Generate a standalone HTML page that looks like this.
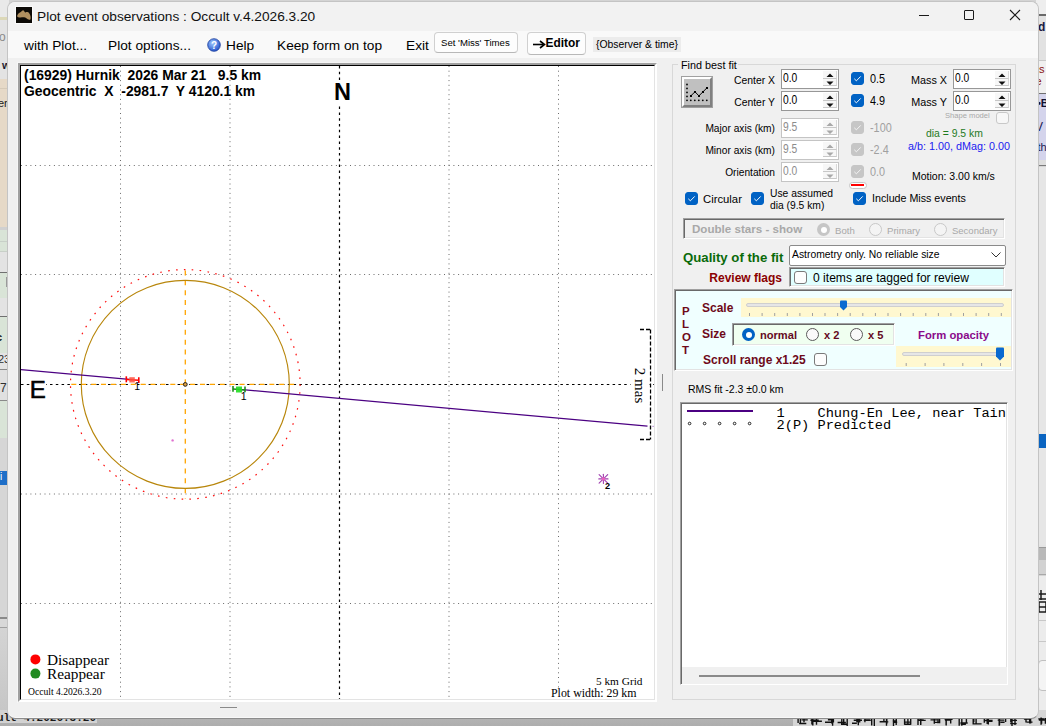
<!DOCTYPE html>
<html><head><meta charset="utf-8">
<style>
*{box-sizing:border-box;margin:0;padding:0}
html,body{width:1046px;height:726px;overflow:hidden;background:#d4d4d4;font-family:"Liberation Sans",sans-serif;font-size:12px;color:#000}
.a{position:absolute;white-space:pre;line-height:1}
#win{position:absolute;left:7px;top:1px;width:1032px;height:718px;background:#f0f0f0;border:1px solid #c4c4c4;border-bottom-color:#8c8c8c;box-shadow:inset 0 -1px 0 #f8f8f8;border-radius:8px;overflow:hidden}
</style></head><body>
<!-- background strips -->
<div id="bgL" style="position:absolute;left:0;top:0;width:9px;height:726px;overflow:hidden">
  <div class="a" style="left:0;top:0;width:9px;height:17px;background:#e9e9e9"></div>
  <div class="a" style="left:0;top:17px;width:9px;height:3px;background:#dcd8b8"></div>
  <div class="a" style="left:0;top:20px;width:9px;height:59px;background:#e3e3e3"></div>
  <div class="a" style="left:0;top:79px;width:9px;height:148px;background:#e6d9c7"></div>
  <div class="a" style="left:0;top:88px;width:9px;height:1px;background:#d6cab8"></div>
  <div class="a" style="left:0;top:227px;width:9px;height:3px;background:#d0d0d0"></div>
  <div class="a" style="left:0;top:230px;width:9px;height:22px;background:#d9e4d7;border-bottom:1px solid #c8d0c8"></div>
  <div class="a" style="left:0;top:241px;width:9px;height:1px;background:#c8d0c8"></div>
  <div class="a" style="left:0;top:252px;width:9px;height:20px;background:#e3e3e3"></div>
  <div class="a" style="left:0;top:272px;width:9px;height:1px;background:#707070"></div>
  <div class="a" style="left:0;top:273px;width:9px;height:25px;background:#d9e4d7"></div>
  <div class="a" style="left:6px;top:277px;width:2px;height:10px;background:#9a9a9a"></div>
  <div class="a" style="left:0;top:298px;width:9px;height:18px;background:#e3e3e3"></div>
  <div class="a" style="left:0;top:316px;width:9px;height:1px;background:#707070"></div>
  <div class="a" style="left:0;top:317px;width:9px;height:36px;background:#d9e4d7"></div>
  <div class="a" style="left:0;top:353px;width:9px;height:16px;background:#e4e4e4"></div>
  <div class="a" style="left:0;top:369px;width:9px;height:1px;background:#8a8a8a"></div>
  <div class="a" style="left:0;top:370px;width:9px;height:30px;background:#e0e0e0"></div>
  <div class="a" style="left:0;top:400px;width:9px;height:1px;background:#8a8a8a"></div>
  <div class="a" style="left:0;top:401px;width:9px;height:37px;background:#d9e4d7"></div>
  <div class="a" style="left:0;top:438px;width:9px;height:33px;background:#d6d6d6"></div>
  <div class="a" style="left:0;top:471px;width:9px;height:14px;background:#1e6fc8"></div>
  <div class="a" style="left:0;top:485px;width:9px;height:132px;background:#d6d6d6"></div>
  <div class="a" style="left:0;top:617px;width:9px;height:2px;background:#8a8a8a"></div>
  <div class="a" style="left:0;top:619px;width:9px;height:8px;background:#d8d8d8"></div>
  <div class="a" style="left:0;top:627px;width:9px;height:1px;background:#a0a0a0"></div>
  <div class="a" style="left:0;top:628px;width:9px;height:98px;background:linear-gradient(#d4d4d4,#c4c4c4)"></div>
  <div class="a" style="left:-1px;top:31px;font-size:12px;color:#8a8a8a">o</div>
  <div class="a" style="left:2px;top:60px;font-size:11px;font-weight:bold;color:#1a1a30">w</div>
  <div class="a" style="left:-2px;top:98px;font-size:11px;color:#202020">er</div>
  <div class="a" style="left:-4px;top:332px;font-size:11px;font-weight:bold;color:#111">c</div>
  <div class="a" style="left:-2px;top:354px;font-size:11px;color:#303030">23</div>
  <div class="a" style="left:0px;top:382px;font-size:12px;color:#303030">7</div>
  <div class="a" style="left:0px;top:472px;font-size:10px;color:#fff">i</div>
</div>
<div id="bgR" style="position:absolute;left:1036px;top:0;width:10px;height:726px;overflow:hidden">
  <div class="a" style="left:0;top:0;width:10px;height:14px;background:#eeeeee"></div>
  <div class="a" style="left:0;top:14px;width:10px;height:2px;background:#6a6a6a"></div>
  <div class="a" style="left:0;top:16px;width:10px;height:44px;background:#e2e2e2"></div>
  <div class="a" style="left:2px;top:21px;font-size:12px;font-weight:bold;color:#1a1a40">d</div>
  <div class="a" style="left:0;top:60px;width:10px;height:33px;background:#f0f0f0;border-top:1px solid #c8c8c8"></div>
  <div class="a" style="left:-3px;top:64px;font-size:11px;color:#8a1010">es</div>
  <div class="a" style="left:-3px;top:76px;font-size:11px;color:#8a1010">ie</div>
  <div class="a" style="left:0;top:93px;width:10px;height:67px;background:#d4d4ec;border-top:1px solid #707070"></div>
  <div class="a" style="left:1px;top:98px;font-size:11px;font-weight:bold;color:#101030">&#8226;B</div>
  <div class="a" style="left:-1px;top:121px;font-size:12px;color:#1a1a50">V</div>
  <div class="a" style="left:-1px;top:142px;font-size:11px;color:#1a1a50">lth</div>
  <div class="a" style="left:0;top:160px;width:10px;height:6px;background:#dedede;border-bottom:1px solid #7a7a7a"></div>
  <div class="a" style="left:0;top:167px;width:10px;height:253px;background:#e6e6e6;border-left:1px solid #bdbdbd"></div>
  <div class="a" style="left:0;top:434px;width:10px;height:14px;background:#0a64c0"></div>
  <div class="a" style="left:0;top:448px;width:10px;height:97px;background:#e6e6e6;border-left:1px solid #bdbdbd"></div>
  <div class="a" style="left:0;top:420px;width:10px;height:14px;background:#e6e6e6;border-left:1px solid #bdbdbd"></div>
  <div class="a" style="left:0;top:545px;width:10px;height:3px;background:#e4e4e4;border-bottom:1px solid #9a9a9a"></div>
  <div class="a" style="left:0;top:548px;width:10px;height:12px;background:#b9b9b9"></div>
  <div class="a" style="left:0;top:560px;width:10px;height:15px;background:#d2d2d2;border-bottom:1px solid #a8a8a8"></div>
  <div class="a" style="left:0;top:576px;width:10px;height:150px;background:#ececec"></div>
  <div class="a" style="left:0;top:620px;width:10px;height:1px;background:#c8c8c8"></div>
  <div class="a" style="left:0;top:641px;width:10px;height:1px;background:#c8c8c8"></div>
  <svg class="a" style="left:0;top:590px" width="10" height="23"><path d="M1 4 H10 M1 9 H10 M5 0 V10 M3 12 H10 V22 H3Z M3 17 H10" stroke="#1a1a1a" stroke-width="1.5" fill="none"/></svg>
  <div class="a" style="left:2px;top:660px;width:12px;height:31px;border:1px solid #c0c0c0;border-radius:4px;background:#f4f4f4"></div>
</div>
<div id="bgB" style="position:absolute;left:0;top:710px;width:1046px;height:16px;background:linear-gradient(#b8b8b8,#aeaeae)"></div>
<div class="a" style="left:0;top:710px;width:97px;height:13px;background:#d2d2d2"></div>
<div class="a" style="left:-3px;top:713px;font-size:11px;font-weight:bold;font-family:'Liberation Mono',monospace;color:#1a1a1a">ult 4.2026.3.20</div>
<div class="a" style="left:793px;top:710px;width:253px;height:16px;background:#d6d6d6"></div>
<svg class="a" style="left:0;top:0" width="1046" height="726"><path d="M800.4 717.6 V723.5 M804.0 717.9 V722.3 M798.1 718.5 V723.0 M801.5 719.9 H807.8 M799.1 723.5 H806.3 M812.8 717.9 V725.5 M816.5 718.2 V724.7 M811.9 718.3 V724.4 M810.4 720.3 H818.8 M813.5 721.3 H821.9 M831.7 718.8 V723.6 M832.6 717.3 V725.7 M833.4 716.3 V722.5 M827.9 719.8 H834.1 M825.0 722.3 H831.5 M841.8 717.1 V724.3 M843.7 718.7 V724.7 M847.2 718.6 V726.0 M837.6 722.5 H845.9 M841.0 724.3 H847.8 M858.3 716.6 V725.3 M856.9 716.9 V722.3 M859.7 719.0 V722.4 M852.0 723.3 H856.8 M853.7 720.3 H862.0 M864.9 717.8 V722.2 M871.7 717.0 V725.5 M874.3 717.5 V726.0 M863.8 720.4 H870.8 M864.4 718.7 H870.4 M883.9 716.5 V722.2 M886.5 716.9 V725.8 M886.8 717.1 V723.8 M879.7 721.6 H886.7 M879.6 721.9 H888.3 M896.2 717.3 V724.9 M893.5 716.9 V725.9 M896.3 717.6 V722.0 M892.7 721.0 H896.8 M892.9 722.2 H897.2 M910.7 717.4 V724.7 M907.9 718.1 V725.0 M904.6 716.2 V724.7 M904.5 724.3 H910.8 M904.8 722.1 H910.7 M920.8 717.1 V724.4 M920.7 717.1 V725.1 M918.0 717.7 V724.9 M917.7 720.4 H925.7 M917.5 719.9 H923.7 M938.0 716.3 V723.3 M934.3 718.5 V723.8 M939.6 716.5 V723.3 M934.0 722.4 H940.2 M930.5 719.9 H937.2 M946.2 718.4 V725.4 M946.1 716.8 V725.2 M950.7 718.4 V723.4 M944.6 719.3 H952.6 M944.9 720.1 H950.9 M961.8 717.2 V725.7 M959.2 716.0 V725.8 M966.4 719.0 V723.7 M960.8 724.2 H965.9 M960.4 723.0 H967.7 M976.1 716.9 V723.4 M973.2 716.2 V724.4 M973.8 718.4 V722.2 M973.0 723.9 H981.6 M973.9 723.9 H980.8 M984.3 718.2 V722.7 M987.2 718.0 V724.1 M988.3 718.8 V724.4 M984.3 720.5 H992.6 M986.7 721.4 H992.5 M999.5 717.6 V725.3 M999.2 718.4 V725.7 M1005.6 718.5 V722.0 M1000.4 722.3 H1004.6 M997.7 720.1 H1004.3 M1015.0 717.4 V725.1 M1010.8 716.2 V722.5 M1012.0 716.2 V725.9 M1010.2 723.6 H1016.7 M1011.2 720.4 H1017.0 M1030.6 717.8 V723.4 M1026.0 717.0 V722.5 M1029.7 718.1 V723.5 M1023.9 719.0 H1029.8 M1026.6 722.1 H1032.5 M1045.4 717.9 V723.7 M1041.1 717.5 V724.8 M1041.6 718.1 V723.8 M1038.8 720.0 H1046.3 M1038.3 718.9 H1044.4 " stroke="#111" stroke-width="1.4" fill="none"/></svg>
<div id="win"></div>
<!-- title bar -->
<div class="a" style="left:8px;top:2px;width:1030px;height:29px;background:#f2f2f2;border-radius:7px 7px 0 0"></div>
<div class="a" style="left:8px;top:31px;width:1030px;height:27px;background:#f9f9f9"></div>
<div id="content">
<div class="a" style="left:16px;top:7px;width:16px;height:16px;background:#0c0a06;box-shadow:0 0 0 1px #fbfbfb"></div>
<svg class="a" style="left:16px;top:7px" width="16" height="16" viewBox="0 0 16 16"><path d="M1.1 9.1 C1.5 7.5 2.5 6.5 3.5 5.8 C4.8 5 6 3.6 7 3.2 C7.8 3.3 8.2 4 8.4 4.5 C8.8 5.2 9.2 5.6 9.6 5.5 C10.2 5 10.8 4.9 11.5 5 C12.5 5.2 13.3 6 13.8 7.2 C14.6 8.8 14.9 10.5 14.5 12.2 C14 12.9 12.8 12.8 11.8 12.3 C10.8 11.6 10 10.6 9 10.4 C7.5 10.2 6 10.4 4.5 10.4 C3.3 10.6 2.2 10.6 1.6 10.1Z" fill="#b0905f"/></svg>
<div class="a" style="left:37px;top:9.8px;font-size:13.7px;color:#111">Plot event observations : Occult v.4.2026.3.20</div>
<div class="a" style="left:919px;top:15px;width:10px;height:1px;background:#1a1a1a"></div>
<div class="a" style="left:964px;top:10px;width:10px;height:10px;border:1px solid #1a1a1a;border-radius:1px"></div>
<svg class="a" style="left:1009px;top:9px" width="12" height="12" viewBox="0 0 12 12"><path d="M1 1 L11 11 M11 1 L1 11" stroke="#1a1a1a" stroke-width="1.1"/></svg>
<div class="a" style="left:24px;top:39px;font-size:13.7px">with Plot...</div>
<div class="a" style="left:108px;top:39px;font-size:13.7px">Plot options...</div>
<svg class="a" style="left:207px;top:38px" width="14" height="14" viewBox="0 0 14 14"><defs><radialGradient id="hg" cx="0.4" cy="0.35" r="0.7"><stop offset="0" stop-color="#9fc8ff"/><stop offset="1" stop-color="#1f4fc8"/></radialGradient></defs><circle cx="7" cy="7" r="6.3" fill="url(#hg)" stroke="#1a3c9a" stroke-width="0.8"/><text x="7" y="11" text-anchor="middle" font-family="Liberation Sans" font-weight="bold" font-size="10" fill="#fff">?</text></svg>
<div class="a" style="left:226px;top:39px;font-size:13.7px">Help</div>
<div class="a" style="left:277px;top:39px;font-size:13.7px">Keep form on top</div>
<div class="a" style="left:406px;top:39px;font-size:13.7px">Exit</div>
<div class="a" style="left:434px;top:32px;width:84px;height:21px;background:#fdfdfd;border:1px solid #d0d0d0;border-bottom-color:#b8b8b8;border-radius:4px"></div>
<div class="a" style="left:441px;top:38px;font-size:9.6px">Set 'Miss' Times</div>
<div class="a" style="left:527px;top:32px;width:59px;height:23px;background:#fdfdfd;border:1px solid #d0d0d0;border-bottom-color:#b8b8b8;border-radius:4px"></div>
<svg class="a" style="left:533px;top:40px" width="13" height="9" viewBox="0 0 13 9"><path d="M0 4.5 H10" stroke="#000" stroke-width="1.6"/><path d="M7 1 L11.5 4.5 L7 8" fill="none" stroke="#000" stroke-width="1.6"/></svg><div class="a" style="left:545.5px;top:38px;font-size:11.9px;font-weight:bold">Editor</div>
<div class="a" style="left:593px;top:37px;width:88px;height:15px;background:#ececec"></div>
<div class="a" style="left:596px;top:40px;font-size:10.4px">{Observer &amp; time}</div>
<div class="a" style="left:17px;top:62px;width:641px;height:641px;border-top:1px solid #f6f6f6;border-left:1px solid #f6f6f6"></div>
<div class="a" style="left:18px;top:63px;width:639px;height:639px;background:#fff;border-top:2px solid #a0a0a0;border-left:2px solid #a0a0a0;border-right:2px solid #fff;border-bottom:2px solid #fff"></div>
<div class="a" style="left:20px;top:65px;width:635px;height:635px;border-top:1px solid #000;border-left:1px solid #000;border-right:1px solid #e3e3e3;border-bottom:1px solid #e3e3e3"></div>
<svg class="a" style="left:21px;top:66px" width="633" height="633" viewBox="21 66 633 633"><line x1="120.5" y1="66" x2="120.5" y2="699" stroke="#6a6a6a" stroke-width="1" stroke-dasharray="1 3.7"/><line x1="230" y1="66" x2="230" y2="699" stroke="#6a6a6a" stroke-width="1" stroke-dasharray="1 3.7"/><line x1="449" y1="66" x2="449" y2="699" stroke="#6a6a6a" stroke-width="1" stroke-dasharray="1 3.7"/><line x1="558.5" y1="66" x2="558.5" y2="699" stroke="#6a6a6a" stroke-width="1" stroke-dasharray="1 3.7"/><line x1="21" y1="165.5" x2="654" y2="165.5" stroke="#6a6a6a" stroke-width="1" stroke-dasharray="1 3.7"/><line x1="21" y1="274.5" x2="654" y2="274.5" stroke="#6a6a6a" stroke-width="1" stroke-dasharray="1 3.7"/><line x1="21" y1="494" x2="654" y2="494" stroke="#6a6a6a" stroke-width="1" stroke-dasharray="1 3.7"/><line x1="21" y1="603.5" x2="654" y2="603.5" stroke="#6a6a6a" stroke-width="1" stroke-dasharray="1 3.7"/><line x1="339.5" y1="66" x2="339.5" y2="699" stroke="#000" stroke-width="1.2" stroke-dasharray="2.5 3.3"/><line x1="21" y1="384.5" x2="654" y2="384.5" stroke="#000" stroke-width="1.2" stroke-dasharray="2.5 3.3"/><line x1="185.3" y1="270.4" x2="185.3" y2="498.4" stroke="#ffa500" stroke-width="1.3" stroke-dasharray="5 4.9"/><line x1="71.30000000000001" y1="384.4" x2="299.3" y2="384.4" stroke="#ffa500" stroke-width="1.3" stroke-dasharray="5 4.9"/><circle cx="185.3" cy="384.4" r="104" fill="none" stroke="#b8860b" stroke-width="1.15"/><circle cx="185.3" cy="384.4" r="114.8" fill="none" stroke="#ff1010" stroke-width="1.2" stroke-dasharray="1.6 6.3265"/><circle cx="185.3" cy="384.4" r="1.9" fill="#e0a040" stroke="#222" stroke-width="1"/><circle cx="172.6" cy="440.4" r="1.2" fill="#e070d0"/><line x1="20.2" y1="369.6" x2="132" y2="379.68" stroke="#4b0082" stroke-width="1.25"/><line x1="240" y1="389.43" x2="647.5" y2="426.2" stroke="#4b0082" stroke-width="1.25"/><rect x="652.5" y="425.8" width="1.2" height="1.2" fill="#b080d0"/><g stroke="#ff0000" stroke-width="1.6"><line x1="126.3" y1="376.3" x2="126.3" y2="382.3"/><line x1="138.8" y1="377.3" x2="138.8" y2="383"/><line x1="126.3" y1="379.5" x2="138.8" y2="380.3"/></g><rect x="129.3" y="377.2" width="5.5" height="5.3" fill="#ff5040" opacity="0.85"/><g stroke="#1e8a1e" stroke-width="1.6"><line x1="233" y1="386" x2="233" y2="391.7"/><line x1="245" y1="386.5" x2="245" y2="392.2"/><line x1="233" y1="389" x2="245" y2="390"/></g><rect x="236" y="386.5" width="6" height="6" fill="#22dd22" opacity="0.9"/><text x="134.3" y="390" font-family="Liberation Sans" font-size="10.5" fill="#000">1</text><text x="240.7" y="399.8" font-family="Liberation Sans" font-size="10.5" fill="#000">1</text><g stroke="#a040b0" stroke-width="1.1" stroke-linecap="round"><line x1="598.8" y1="478.9" x2="608.0" y2="478.9"/><line x1="603.4" y1="474.29999999999995" x2="603.4" y2="483.5"/><line x1="599.1" y1="474.59999999999997" x2="607.6999999999999" y2="483.2"/><line x1="599.1" y1="483.2" x2="607.6999999999999" y2="474.59999999999997"/></g><circle cx="603.4" cy="478.9" r="1.6" fill="#f060c0"/><text x="605" y="488.6" font-family="Liberation Sans" font-size="9.2" font-weight="bold" fill="#000">2</text><g stroke="#000" stroke-width="1.3" fill="none"><line x1="650.5" y1="329.5" x2="650.5" y2="439.5" stroke-dasharray="4 2"/><line x1="640" y1="329.5" x2="650.5" y2="329.5" stroke-dasharray="4 2"/><line x1="640" y1="439.5" x2="650.5" y2="439.5" stroke-dasharray="4 2"/></g><rect x="630.5" y="366" width="19" height="38" fill="#fff"/><text transform="translate(634.5,367.8) rotate(90)" font-family="Liberation Serif" font-size="15" fill="#000">2 mas</text><circle cx="35.4" cy="659.4" r="5" fill="#ff0000"/><circle cx="35.4" cy="673.6" r="5" fill="#228b22"/></svg>
<div class="a" style="left:24px;top:69px;font-size:13.9px;font-weight:bold;white-space:pre">(16929) Hurnik  2026 Mar 21   9.5 km</div>
<div class="a" style="left:24px;top:85px;font-size:13.9px;font-weight:bold;white-space:pre">Geocentric  X  -2981.7  Y 4120.1 km</div>
<div class="a" style="left:334px;top:81px;font-size:23.5px;font-weight:bold;background:#fff;padding-top:0px">N</div>
<div class="a" style="left:29.7px;top:378.5px;font-size:24px;background:#fff;line-height:0.95;-webkit-text-stroke:0.6px #000">E</div>
<div class="a" style="left:47px;top:652px;font-size:15.3px;font-family:'Liberation Serif',serif">Disappear</div>
<div class="a" style="left:47px;top:666px;font-size:15.3px;font-family:'Liberation Serif',serif">Reappear</div>
<div class="a" style="left:28px;top:687px;font-size:9.6px;font-family:'Liberation Serif',serif">Occult 4.2026.3.20</div>
<div class="a" style="left:596px;top:676px;font-size:11.3px;font-family:'Liberation Serif',serif">5 km Grid</div>
<div class="a" style="left:551px;top:687.5px;font-size:11.9px;font-family:'Liberation Serif',serif;background:#fff;padding-right:1px">Plot width: 29 km</div>
<div class="a" style="left:662px;top:374px;width:1px;height:17px;background:#8a8a8a"></div>
<div class="a" style="left:220px;top:707px;width:17px;height:1px;background:#8a8a8a"></div>
<div class="a" style="left:672px;top:64px;width:344px;height:636px;border:1px solid #d8d8d8"></div>
<div class="a" style="left:678px;top:58px;width:60px;height:12px;background:#f0f0f0"></div>
<div class="a" style="left:681px;top:59.5px;font-size:10.8px;color:#000;">Find best fit</div>
<div class="a" style="left:681px;top:76px;width:32px;height:32px;background:#c0c0c0;border:1px solid #a0a0a0"></div>
<div class="a" style="left:682px;top:77px;width:30px;height:30px;border-top:2px solid #fff;border-left:2px solid #fff;border-right:2px solid #808080;border-bottom:2px solid #808080"></div>
<svg class="a" style="left:681px;top:76px" width="32" height="32" viewBox="681 76 32 32"><circle cx="687" cy="84.5" r="0.9" fill="#000"/><circle cx="687" cy="88.4" r="0.9" fill="#000"/><circle cx="687" cy="92.4" r="0.9" fill="#000"/><circle cx="687" cy="96.4" r="0.9" fill="#000"/><circle cx="687" cy="100.3" r="0.9" fill="#000"/><circle cx="690.8" cy="100.3" r="0.9" fill="#000"/><circle cx="694.8" cy="100.3" r="0.9" fill="#000"/><circle cx="698.8" cy="100.3" r="0.9" fill="#000"/><circle cx="702.8" cy="100.3" r="0.9" fill="#000"/><circle cx="706.8" cy="100.3" r="0.9" fill="#000"/><polyline points="690.8,95.9 695,91.8 698.9,95.9 703,91.8 707,87.8" fill="none" stroke="#000" stroke-width="1"/><g fill="#000"><rect x="690" y="95" width="2" height="2"/><rect x="694" y="91" width="2" height="2"/><rect x="698" y="95" width="2" height="2"/><rect x="702" y="91" width="2" height="2"/><rect x="706" y="87" width="2" height="2"/></g></svg>
<div class="a" style="left:475px;top:75.5px;width:300px;text-align:right;font-size:10.4px;color:#000;">Center X</div>
<div class="a" style="left:781px;top:69px;width:58px;height:20px;background:#fff;border:1px solid #979797"></div><div class="a" style="left:783px;top:72.4px;font-size:12.5px;color:#000;transform:scaleX(0.82);transform-origin:0 0">0.0</div><div class="a" style="left:823px;top:71px;width:14px;height:8px;background:#f7f7f7;border-right:1px solid #d8d8d8;border-bottom:1px solid #c8c8c8"></div><div class="a" style="left:823px;top:79px;width:14px;height:7px;background:#f7f7f7;border-right:1px solid #d8d8d8;border-bottom:1px solid #c8c8c8"></div><svg class="a" style="left:823px;top:71px" width="14" height="16" viewBox="0 0 14 16"><path d="M3.5 6 L7 2.5 L10.5 6Z M3.5 10.5 L7 14 L10.5 10.5Z" fill="#111"/></svg>
<div class="a" style="left:475px;top:97.5px;width:300px;text-align:right;font-size:10.4px;color:#000;">Center Y</div>
<div class="a" style="left:781px;top:91px;width:58px;height:20px;background:#fff;border:1px solid #979797"></div><div class="a" style="left:783px;top:94.4px;font-size:12.5px;color:#000;transform:scaleX(0.82);transform-origin:0 0">0.0</div><div class="a" style="left:823px;top:93px;width:14px;height:8px;background:#f7f7f7;border-right:1px solid #d8d8d8;border-bottom:1px solid #c8c8c8"></div><div class="a" style="left:823px;top:101px;width:14px;height:7px;background:#f7f7f7;border-right:1px solid #d8d8d8;border-bottom:1px solid #c8c8c8"></div><svg class="a" style="left:823px;top:93px" width="14" height="16" viewBox="0 0 14 16"><path d="M3.5 6 L7 2.5 L10.5 6Z M3.5 10.5 L7 14 L10.5 10.5Z" fill="#111"/></svg>
<div class="a" style="left:475px;top:124px;width:300px;text-align:right;font-size:10.2px;color:#000;">Major axis (km)</div>
<div class="a" style="left:781px;top:118px;width:58px;height:20px;background:#fff;border:1px solid #c4c4c4"></div><div class="a" style="left:783px;top:121.4px;font-size:12.5px;color:#8c8c8c;transform:scaleX(0.82);transform-origin:0 0">9.5</div><div class="a" style="left:823px;top:120px;width:14px;height:8px;background:#f7f7f7;border-right:1px solid #d8d8d8;border-bottom:1px solid #c8c8c8"></div><div class="a" style="left:823px;top:128px;width:14px;height:7px;background:#f7f7f7;border-right:1px solid #d8d8d8;border-bottom:1px solid #c8c8c8"></div><svg class="a" style="left:823px;top:120px" width="14" height="16" viewBox="0 0 14 16"><path d="M3.5 6 L7 2.5 L10.5 6Z M3.5 10.5 L7 14 L10.5 10.5Z" fill="#a8a8a8"/></svg>
<div class="a" style="left:475px;top:146px;width:300px;text-align:right;font-size:10.2px;color:#000;">Minor axis (km)</div>
<div class="a" style="left:781px;top:140px;width:58px;height:20px;background:#fff;border:1px solid #c4c4c4"></div><div class="a" style="left:783px;top:143.4px;font-size:12.5px;color:#8c8c8c;transform:scaleX(0.82);transform-origin:0 0">9.5</div><div class="a" style="left:823px;top:142px;width:14px;height:8px;background:#f7f7f7;border-right:1px solid #d8d8d8;border-bottom:1px solid #c8c8c8"></div><div class="a" style="left:823px;top:150px;width:14px;height:7px;background:#f7f7f7;border-right:1px solid #d8d8d8;border-bottom:1px solid #c8c8c8"></div><svg class="a" style="left:823px;top:142px" width="14" height="16" viewBox="0 0 14 16"><path d="M3.5 6 L7 2.5 L10.5 6Z M3.5 10.5 L7 14 L10.5 10.5Z" fill="#a8a8a8"/></svg>
<div class="a" style="left:475px;top:167.5px;width:300px;text-align:right;font-size:10.2px;color:#000;">Orientation</div>
<div class="a" style="left:781px;top:162px;width:58px;height:20px;background:#fff;border:1px solid #c4c4c4"></div><div class="a" style="left:783px;top:165.4px;font-size:12.5px;color:#8c8c8c;transform:scaleX(0.82);transform-origin:0 0">0.0</div><div class="a" style="left:823px;top:164px;width:14px;height:8px;background:#f7f7f7;border-right:1px solid #d8d8d8;border-bottom:1px solid #c8c8c8"></div><div class="a" style="left:823px;top:172px;width:14px;height:7px;background:#f7f7f7;border-right:1px solid #d8d8d8;border-bottom:1px solid #c8c8c8"></div><svg class="a" style="left:823px;top:164px" width="14" height="16" viewBox="0 0 14 16"><path d="M3.5 6 L7 2.5 L10.5 6Z M3.5 10.5 L7 14 L10.5 10.5Z" fill="#a8a8a8"/></svg>
<div class="a" style="left:851px;top:72px;width:13px;height:13px;background:#0062c4;border:1px solid #0062c4;border-radius:3px"></div><svg class="a" style="left:851px;top:72px" width="13" height="13" viewBox="0 0 13 13"><path d="M3.3 6.8 L5.4 8.8 L9.7 4.4" fill="none" stroke="#fff" stroke-width="0.95"/></svg>
<div class="a" style="left:870px;top:72.6px;font-size:12.6px;color:#000;transform:scaleX(0.86);transform-origin:0 0">0.5</div>
<div class="a" style="left:851px;top:94px;width:13px;height:13px;background:#0062c4;border:1px solid #0062c4;border-radius:3px"></div><svg class="a" style="left:851px;top:94px" width="13" height="13" viewBox="0 0 13 13"><path d="M3.3 6.8 L5.4 8.8 L9.7 4.4" fill="none" stroke="#fff" stroke-width="0.95"/></svg>
<div class="a" style="left:870px;top:94.6px;font-size:12.6px;color:#000;transform:scaleX(0.86);transform-origin:0 0">4.9</div>
<div class="a" style="left:851px;top:121px;width:13px;height:13px;background:#c6c6c6;border:1px solid #c6c6c6;border-radius:3px"></div><svg class="a" style="left:851px;top:121px" width="13" height="13" viewBox="0 0 13 13"><path d="M3.3 6.8 L5.4 8.8 L9.7 4.4" fill="none" stroke="#f4f4f4" stroke-width="0.95"/></svg>
<div class="a" style="left:870px;top:121.6px;font-size:12.6px;color:#a0a0a0;transform:scaleX(0.86);transform-origin:0 0">-100</div>
<div class="a" style="left:851px;top:143px;width:13px;height:13px;background:#c6c6c6;border:1px solid #c6c6c6;border-radius:3px"></div><svg class="a" style="left:851px;top:143px" width="13" height="13" viewBox="0 0 13 13"><path d="M3.3 6.8 L5.4 8.8 L9.7 4.4" fill="none" stroke="#f4f4f4" stroke-width="0.95"/></svg>
<div class="a" style="left:870px;top:143.6px;font-size:12.6px;color:#a0a0a0;transform:scaleX(0.86);transform-origin:0 0">-2.4</div>
<div class="a" style="left:851px;top:165px;width:13px;height:13px;background:#c6c6c6;border:1px solid #c6c6c6;border-radius:3px"></div><svg class="a" style="left:851px;top:165px" width="13" height="13" viewBox="0 0 13 13"><path d="M3.3 6.8 L5.4 8.8 L9.7 4.4" fill="none" stroke="#f4f4f4" stroke-width="0.95"/></svg>
<div class="a" style="left:870px;top:165.6px;font-size:12.6px;color:#a0a0a0;transform:scaleX(0.86);transform-origin:0 0">0.0</div>
<div class="a" style="left:848.5px;top:181.5px;width:18px;height:7.5px;background:#fff;border:1px solid #c4c4c4;border-radius:4px"></div>
<div class="a" style="left:851px;top:184px;width:13px;height:2.2px;background:#ff0000"></div>
<div class="a" style="left:647px;top:75px;width:300px;text-align:right;font-size:10.8px;color:#000;">Mass X</div>
<div class="a" style="left:953px;top:69px;width:58px;height:20px;background:#fff;border:1px solid #979797"></div><div class="a" style="left:955px;top:72.4px;font-size:12.5px;color:#000;transform:scaleX(0.82);transform-origin:0 0">0.0</div><div class="a" style="left:995px;top:71px;width:14px;height:8px;background:#f7f7f7;border-right:1px solid #d8d8d8;border-bottom:1px solid #c8c8c8"></div><div class="a" style="left:995px;top:79px;width:14px;height:7px;background:#f7f7f7;border-right:1px solid #d8d8d8;border-bottom:1px solid #c8c8c8"></div><svg class="a" style="left:995px;top:71px" width="14" height="16" viewBox="0 0 14 16"><path d="M3.5 6 L7 2.5 L10.5 6Z M3.5 10.5 L7 14 L10.5 10.5Z" fill="#111"/></svg>
<div class="a" style="left:647px;top:97px;width:300px;text-align:right;font-size:10.8px;color:#000;">Mass Y</div>
<div class="a" style="left:953px;top:91px;width:58px;height:20px;background:#fff;border:1px solid #979797"></div><div class="a" style="left:955px;top:94.4px;font-size:12.5px;color:#000;transform:scaleX(0.82);transform-origin:0 0">0.0</div><div class="a" style="left:995px;top:93px;width:14px;height:8px;background:#f7f7f7;border-right:1px solid #d8d8d8;border-bottom:1px solid #c8c8c8"></div><div class="a" style="left:995px;top:101px;width:14px;height:7px;background:#f7f7f7;border-right:1px solid #d8d8d8;border-bottom:1px solid #c8c8c8"></div><svg class="a" style="left:995px;top:93px" width="14" height="16" viewBox="0 0 14 16"><path d="M3.5 6 L7 2.5 L10.5 6Z M3.5 10.5 L7 14 L10.5 10.5Z" fill="#111"/></svg>
<div class="a" style="left:945px;top:112px;font-size:7.6px;color:#a8a8a8;">Shape model</div>
<div class="a" style="left:996px;top:112px;width:13px;height:12px;background:#f7f7f7;border:1px solid #c8c8c8;border-radius:3px"></div>
<div class="a" style="left:926px;top:128.5px;font-size:10.4px;color:#1e7a1e;">dia = 9.5 km</div>
<div class="a" style="left:908px;top:141px;font-size:10.8px;color:#2020f0;">a/b: 1.00, dMag: 0.00</div>
<div class="a" style="left:912px;top:171px;font-size:10.5px;color:#000;">Motion: 3.00 km/s</div>
<div class="a" style="left:685px;top:192px;width:13px;height:13px;background:#0062c4;border:1px solid #0062c4;border-radius:3px"></div><svg class="a" style="left:685px;top:192px" width="13" height="13" viewBox="0 0 13 13"><path d="M3.3 6.8 L5.4 8.8 L9.7 4.4" fill="none" stroke="#fff" stroke-width="0.95"/></svg>
<div class="a" style="left:703px;top:193.5px;font-size:11.3px;color:#000;">Circular</div>
<div class="a" style="left:751px;top:192px;width:13px;height:13px;background:#0062c4;border:1px solid #0062c4;border-radius:3px"></div><svg class="a" style="left:751px;top:192px" width="13" height="13" viewBox="0 0 13 13"><path d="M3.3 6.8 L5.4 8.8 L9.7 4.4" fill="none" stroke="#fff" stroke-width="0.95"/></svg>
<div class="a" style="left:770px;top:188.5px;font-size:10.3px;color:#000;">Use assumed</div>
<div class="a" style="left:770px;top:200.5px;font-size:10.3px;color:#000;">dia (9.5 km)</div>
<div class="a" style="left:853px;top:192px;width:13px;height:13px;background:#0062c4;border:1px solid #0062c4;border-radius:3px"></div><svg class="a" style="left:853px;top:192px" width="13" height="13" viewBox="0 0 13 13"><path d="M3.3 6.8 L5.4 8.8 L9.7 4.4" fill="none" stroke="#fff" stroke-width="0.95"/></svg>
<div class="a" style="left:872px;top:193px;font-size:10.7px;color:#000;">Include Miss events</div>
<div class="a" style="left:683px;top:218px;width:322px;height:21px;border-top:1px solid #a0a0a0;border-left:1px solid #a0a0a0;border-right:1px solid #fff;border-bottom:1px solid #fff;box-shadow:inset 1px 1px 0 #696969,inset -1px -1px 0 #e3e3e3"></div>
<div class="a" style="left:692px;top:223px;font-size:11.6px;color:#a8a8a8;font-weight:bold">Double stars - show</div>
<div class="a" style="left:817px;top:223px;width:13px;height:13px;border-radius:50%;background:#c6c6c6"></div><div class="a" style="left:820.5px;top:226.5px;width:6px;height:6px;border-radius:50%;background:#fff"></div>
<div class="a" style="left:835px;top:226px;font-size:9.6px;color:#a8a8a8;">Both</div>
<div class="a" style="left:869px;top:223px;width:13px;height:13px;border-radius:50%;background:#f4f4f4;border:1px solid #c8c8c8"></div>
<div class="a" style="left:887px;top:226px;font-size:9.6px;color:#a8a8a8;">Primary</div>
<div class="a" style="left:934px;top:223px;width:13px;height:13px;border-radius:50%;background:#f4f4f4;border:1px solid #c8c8c8"></div>
<div class="a" style="left:952px;top:226px;font-size:9.5px;color:#a8a8a8;">Secondary</div>
<div class="a" style="left:683px;top:251px;font-size:13.2px;color:#0a6a0a;font-weight:bold">Quality of the fit</div>
<div class="a" style="left:789px;top:245px;width:217px;height:21px;background:#fff;border:1px solid #8a8a8a;border-radius:2px"></div>
<div class="a" style="left:792px;top:249.5px;font-size:10.35px;color:#000;">Astrometry only. No reliable size</div>
<svg class="a" style="left:991px;top:252px" width="10" height="6" viewBox="0 0 10 6"><path d="M0.5 0.5 L5 5 L9.5 0.5" fill="none" stroke="#333" stroke-width="1"/></svg>
<div class="a" style="left:482px;top:272px;width:300px;text-align:right;font-size:12px;color:#8b0000;font-weight:bold">Review flags</div>
<div class="a" style="left:789px;top:267px;width:216px;height:20px;background:#e0ffff;border-top:1px solid #a0a0a0;border-left:1px solid #a0a0a0;border-right:1px solid #fff;border-bottom:1px solid #fff;box-shadow:inset 1px 1px 0 #696969,inset -1px -1px 0 #e3e3e3"></div>
<div class="a" style="left:794px;top:271px;width:13px;height:13px;background:#fdfdfd;border:1px solid #7a7a7a;border-radius:3px"></div>
<div class="a" style="left:813px;top:271.5px;font-size:12.1px;color:#000;">0 items are tagged for review</div>
<div class="a" style="left:674px;top:289px;width:339px;height:82px;background:#f0ffff;border-top:1px solid #a0a0a0;border-left:1px solid #a0a0a0;border-right:1px solid #fff;border-bottom:1px solid #fff;box-shadow:inset 1px 1px 0 #696969,inset -1px -1px 0 #e3e3e3"></div>
<div class="a" style="left:682px;top:306px;font-size:11.5px;color:#6e0a1a;font-weight:bold">P</div>
<div class="a" style="left:682px;top:319px;font-size:11.5px;color:#6e0a1a;font-weight:bold">L</div>
<div class="a" style="left:682px;top:332px;font-size:11.5px;color:#6e0a1a;font-weight:bold">O</div>
<div class="a" style="left:682px;top:345px;font-size:11.5px;color:#6e0a1a;font-weight:bold">T</div>
<div class="a" style="left:702px;top:302px;font-size:12px;color:#6e0a1a;font-weight:bold">Scale</div>
<div class="a" style="left:741px;top:298px;width:270px;height:19px;background:#fff8d0"></div>
<div class="a" style="left:746px;top:303px;width:258px;height:4px;background:#e6e6e6;border:1px solid #cfcfcf;border-radius:2px"></div>
<svg class="a" style="left:0px;top:313px" width="1046" height="4"><rect x="749.0" y="0" width="1" height="3" fill="#a0a0a0"/><rect x="761.6" y="0" width="1" height="3" fill="#a0a0a0"/><rect x="774.2" y="0" width="1" height="3" fill="#a0a0a0"/><rect x="786.8" y="0" width="1" height="3" fill="#a0a0a0"/><rect x="799.4" y="0" width="1" height="3" fill="#a0a0a0"/><rect x="812.0" y="0" width="1" height="3" fill="#a0a0a0"/><rect x="824.5" y="0" width="1" height="3" fill="#a0a0a0"/><rect x="837.1" y="0" width="1" height="3" fill="#a0a0a0"/><rect x="849.7" y="0" width="1" height="3" fill="#a0a0a0"/><rect x="862.3" y="0" width="1" height="3" fill="#a0a0a0"/><rect x="874.9" y="0" width="1" height="3" fill="#a0a0a0"/><rect x="887.5" y="0" width="1" height="3" fill="#a0a0a0"/><rect x="900.1" y="0" width="1" height="3" fill="#a0a0a0"/><rect x="912.7" y="0" width="1" height="3" fill="#a0a0a0"/><rect x="925.3" y="0" width="1" height="3" fill="#a0a0a0"/><rect x="937.9" y="0" width="1" height="3" fill="#a0a0a0"/><rect x="950.4" y="0" width="1" height="3" fill="#a0a0a0"/><rect x="963.0" y="0" width="1" height="3" fill="#a0a0a0"/><rect x="975.6" y="0" width="1" height="3" fill="#a0a0a0"/><rect x="988.2" y="0" width="1" height="3" fill="#a0a0a0"/><rect x="1000.8" y="0" width="1" height="3" fill="#a0a0a0"/></svg>
<svg class="a" style="left:839px;top:300px" width="9" height="11" viewBox="0 0 9 11"><path d="M1 1.5 Q1 0.5 2 0.5 L7 0.5 Q8 0.5 8 1.5 L8 7 L4.5 10.5 L1 7Z" fill="#0a6ad0"/></svg>
<div class="a" style="left:702px;top:328px;font-size:12px;color:#6e0a1a;font-weight:bold">Size</div>
<div class="a" style="left:732px;top:323px;width:163px;height:23px;background:#f0fff0;border-top:1px solid #a0a0a0;border-left:1px solid #a0a0a0;border-right:1px solid #fff;border-bottom:1px solid #fff;box-shadow:inset 1px 1px 0 #696969,inset -1px -1px 0 #e3e3e3"></div>
<div class="a" style="left:742px;top:328px;width:13px;height:13px;border-radius:50%;background:#0062c4"></div><div class="a" style="left:745.5px;top:331.5px;width:6px;height:6px;border-radius:50%;background:#fff"></div>
<div class="a" style="left:760px;top:330px;font-size:11.1px;color:#640a1e;font-weight:bold">normal</div>
<div class="a" style="left:806px;top:328px;width:13px;height:13px;border-radius:50%;background:#fafafa;border:1px solid #5a5a5a"></div>
<div class="a" style="left:824px;top:330px;font-size:11.1px;color:#640a1e;font-weight:bold">x 2</div>
<div class="a" style="left:850px;top:328px;width:13px;height:13px;border-radius:50%;background:#fafafa;border:1px solid #5a5a5a"></div>
<div class="a" style="left:868px;top:330px;font-size:11.1px;color:#640a1e;font-weight:bold">x 5</div>
<div class="a" style="left:918px;top:330px;font-size:11.3px;color:#8a0a8a;font-weight:bold">Form opacity</div>
<div class="a" style="left:703px;top:354px;font-size:12px;color:#6e0a1a;font-weight:bold">Scroll range x1.25</div>
<div class="a" style="left:814px;top:353px;width:13px;height:13px;background:#fdfdfd;border:1px solid #7a7a7a;border-radius:3px"></div>
<div class="a" style="left:896px;top:346px;width:115px;height:21px;background:#fff8d0"></div>
<div class="a" style="left:902px;top:352px;width:102px;height:4px;background:#e6e6e6;border:1px solid #cfcfcf;border-radius:2px"></div>
<svg class="a" style="left:0px;top:363px" width="1046" height="4"><rect x="905.7" y="0" width="1" height="3" fill="#a0a0a0"/><rect x="924.6" y="0" width="1" height="3" fill="#a0a0a0"/><rect x="943.4" y="0" width="1" height="3" fill="#a0a0a0"/><rect x="962.3" y="0" width="1" height="3" fill="#a0a0a0"/><rect x="981.1" y="0" width="1" height="3" fill="#a0a0a0"/><rect x="1000.0" y="0" width="1" height="3" fill="#a0a0a0"/></svg>
<svg class="a" style="left:995px;top:347px" width="10" height="14" viewBox="0 0 10 14"><path d="M1 1.5 Q1 0.5 2 0.5 L8 0.5 Q9 0.5 9 1.5 L9 9.5 L5 13.5 L1 9.5Z" fill="#0a6ad0"/></svg>
<div class="a" style="left:688px;top:384px;font-size:10.5px;color:#000;">RMS fit -2.3 ±0.0 km</div>
<div class="a" style="left:680px;top:402px;width:328px;height:283px;background:#fff;border-top:1px solid #a0a0a0;border-left:1px solid #a0a0a0;border-right:1px solid #fff;border-bottom:1px solid #fff;box-shadow:inset 1px 1px 0 #696969,inset -1px -1px 0 #e3e3e3"></div>
<div class="a" style="left:682px;top:667px;width:325px;height:17px;background:#f0f0f0"></div>
<div class="a" style="left:699px;top:675px;width:221px;height:2px;background:#8a8a8a"></div>
<div class="a" style="left:687px;top:410px;width:66px;height:2px;background:#4b0082"></div>
<svg class="a" style="left:0;top:0" width="1046" height="440"><circle cx="689.6" cy="423.5" r="1.3" fill="#fff" stroke="#222" stroke-width="1"/><circle cx="704.6" cy="423.5" r="1.3" fill="#fff" stroke="#222" stroke-width="1"/><circle cx="719.6" cy="423.5" r="1.3" fill="#fff" stroke="#222" stroke-width="1"/><circle cx="734.6" cy="423.5" r="1.3" fill="#fff" stroke="#222" stroke-width="1"/><circle cx="749.6" cy="423.5" r="1.3" fill="#fff" stroke="#222" stroke-width="1"/></svg>
<div class="a" style="left:776.5px;top:406.8px;font-size:13.66px;color:#000;font-family:'Liberation Mono',monospace">1    Chung-En Lee, near Tain</div>
<div class="a" style="left:776.5px;top:418.8px;font-size:13.66px;color:#000;font-family:'Liberation Mono',monospace">2(P) Predicted</div>
</div>
</body></html>
